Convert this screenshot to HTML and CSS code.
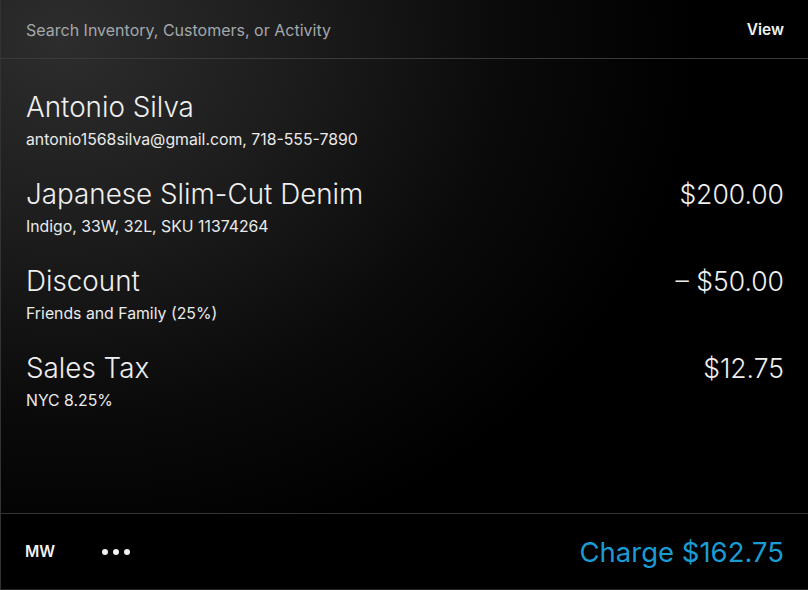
FILE: index.html
```html
<!DOCTYPE html>
<html>
<head>
<meta charset="utf-8">
<link rel="stylesheet" href="styles.css">
</head>
<body>
<div class="app">
  <header class="header">
    <div class="search">Search Inventory, Customers, or Activity</div>
    <div class="view">View</div>
  </header>
  <main class="lines">
    <div class="row">
      <div class="info">
        <div class="title">Antonio Silva</div>
        <div class="sub">antonio1568silva@gmail.com, 718-555-7890</div>
      </div>
    </div>
    <div class="row">
      <div class="info">
        <div class="title">Japanese Slim-Cut Denim</div>
        <div class="sub">Indigo, 33W, 32L, SKU 11374264</div>
      </div>
      <div class="amount">$200.00</div>
    </div>
    <div class="row">
      <div class="info">
        <div class="title">Discount</div>
        <div class="sub">Friends and Family (25%)</div>
      </div>
      <div class="amount">– $50.00</div>
    </div>
    <div class="row">
      <div class="info">
        <div class="title">Sales Tax</div>
        <div class="sub">NYC 8.25%</div>
      </div>
      <div class="amount">$12.75</div>
    </div>
  </main>
  <footer class="footer">
    <div class="user">MW</div>
    <div class="more"><span class="dot"></span><span class="dot"></span><span class="dot"></span></div>
    <div class="charge">Charge $162.75</div>
  </footer>
</div>
</body>
</html>
```

FILE: styles.css
```css
html, body {
  margin: 0;
  padding: 0;
  background: #000;
}
.app {
  width: 807px;
  height: 589px;
  border-left: 1px solid #333;
  border-bottom: 1px solid #222;
  display: flex;
  flex-direction: column;
  font-family: Inter, "Noto Sans", sans-serif;
  color: #ececec;
  background: radial-gradient(ellipse 640px 540px at 60px 40px, #2d2d2d 0%, #1d1d1d 35%, #0a0a0a 70%, #000 100%);
}
.header {
  box-sizing: border-box;
  height: 59px;
  flex: none;
  display: flex;
  align-items: center;
  justify-content: space-between;
  padding: 1px 24px 0 25px;
  border-bottom: 1px solid #3a3a3a;
}
.search {
  font-size: 16px;
  color: #a3a8ad;
}
.view {
  font-size: 15.5px;
  font-weight: 600;
  color: #f2f2f2;
}
.lines {
  flex: 1;
  padding: 32px 24px 0 25px;
}
.row {
  height: 87px;
  display: flex;
  justify-content: space-between;
  align-items: flex-start;
}
.title {
  font-size: 27.8px;
  font-weight: 300;
  line-height: 32px;
  color: #efefef;
}
.sub {
  font-size: 15.8px;
  line-height: 20px;
  margin-top: 7px;
  color: #eaeaea;
}
.amount {
  font-size: 26.5px;
  font-weight: 300;
  line-height: 32px;
  color: #efefef;
}
.footer {
  height: 75px;
  flex: none;
  display: flex;
  align-items: center;
  padding: 0 24px 0 24px;
  border-top: 1px solid #333;
  background: #000;
}
.user {
  font-size: 15.5px;
  font-weight: 600;
  color: #f2f2f2;
  width: 77px;
}
.more {
  display: flex;
  gap: 5px;
}
.dot {
  width: 6px;
  height: 6px;
  border-radius: 50%;
  background: #f2f2f2;
}
.charge {
  margin-left: auto;
  font-size: 27.5px;
  font-weight: 400;
  color: #1a9cd3;
}
```
